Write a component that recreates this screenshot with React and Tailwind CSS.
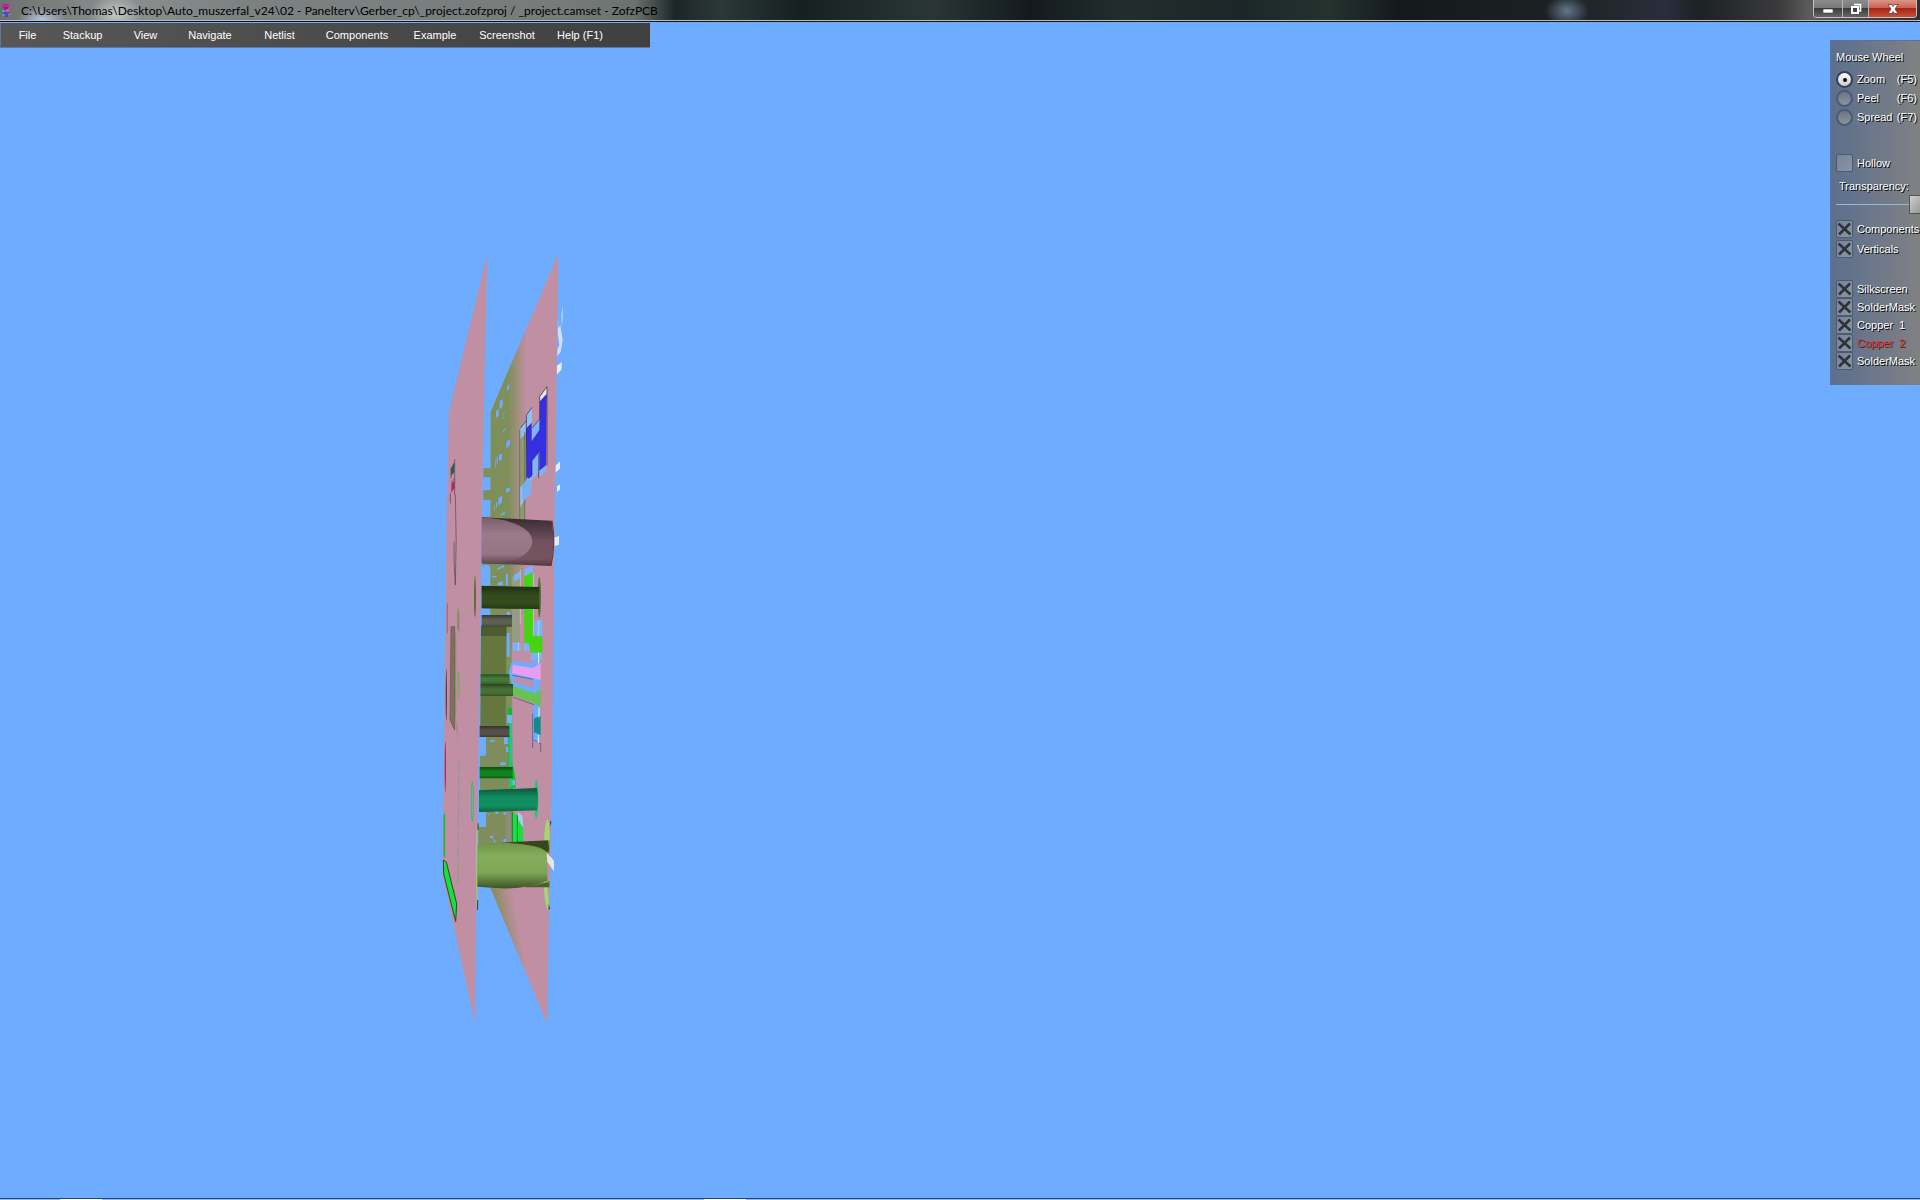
import React, { useState } from "react";

const MENU_ITEMS = [
  "File",
  "Stackup",
  "View",
  "Navigate",
  "Netlist",
  "Components",
  "Example",
  "Screenshot",
  "Help (F1)",
];

const WHEEL_MODES = [
  { name: "Zoom", shortcut: "(F5)" },
  { name: "Peel", shortcut: "(F6)" },
  { name: "Spread", shortcut: "(F7)" },
];

const LAYERS = [
  { id: "silk-top", name: "Silkscreen" },
  { id: "mask-top", name: "SolderMask" },
  { id: "copper-1", name: "Copper  1" },
  { id: "copper-2", name: "Copper  2", active: true },
  { id: "mask-bottom", name: "SolderMask" },
];

const AppIcon = () => (
  <svg viewBox="0 0 12 15" className="mt-[3px] h-[15px] w-3 shrink-0" aria-hidden="true">
    <rect x="1" y="1" width="7" height="4" rx="1" fill="#c0269a" />
    <rect x="8" y="2" width="4" height="1" fill="#8d5c7c" />
    <rect x="3" y="4" width="4" height="3" fill="#8a1d83" />
    <rect x="1" y="7" width="3" height="2" fill="#3fae9a" />
    <rect x="5" y="6" width="3" height="4" fill="#e04fc0" />
    <rect x="2" y="9" width="6" height="2" fill="#4848c8" />
    <rect x="1" y="11" width="3" height="2" fill="#3c9fc0" />
    <rect x="4" y="11" width="3" height="3" fill="#7a35c0" />
    <rect x="7" y="11" width="2" height="1" fill="#4fae6a" />
  </svg>
);

const TitleBar = () => (
  <header className="relative flex h-[22px] shrink-0 items-start justify-between border-b border-[#10131c] bg-[radial-gradient(ellipse_22px_16px_at_1567px_11px,#65758a,transparent),linear-gradient(90deg,#6d7271_0px,#8b8f8f_120px,#7c8282_240px,#777c7b_560px,#6a7270_635px,#1d2627_675px,#2b3836_720px,#15201f_800px,#2a3634_930px,#131a1e_1030px,#222d2b_1120px,#1c2628_1240px,#25322e_1330px,#14191b_1400px,#1b2022_1540px,#20272b_1600px,#2a2e3a_1665px,#1c2124_1700px,#3b3b3c_1780px,#5c5c5d_1810px,#2d2f30_100%)]">
    <div className="absolute inset-x-0 bottom-0 h-px bg-[#b9bdc0]" />
    <div className="flex h-5 w-[668px] items-start gap-2 bg-[radial-gradient(ellipse_24px_14px_at_42px_20px,#b9c3dc,transparent),radial-gradient(ellipse_26px_20px_at_116px_14px,#c3c8c5,transparent)] pl-px">
      <AppIcon />
      <h1 className="whitespace-nowrap font-[Lato,sans-serif] text-[12px] leading-[22px] text-black">
        C:\Users\Thomas\Desktop\Auto_muszerfal_v24\02 - Panelterv\Gerber_cp\_project.zofzproj / _project.camset - ZofzPCB
      </h1>
    </div>
    <div className="mr-[3px] flex h-[18px] overflow-hidden rounded-b-[4px] border border-t-0 border-[#c2c2c2] bg-gradient-to-b from-[#8e8e8e] via-[#6a6a6a] to-[#474747]">
      <button type="button" aria-label="Minimize" className="flex w-[29px] items-center justify-center border-r border-[#b8b8b8] bg-[linear-gradient(#8c8c8c_0%,#777_48%,#3c3c3c_50%,#666_100%)]">
        <svg viewBox="0 0 12 12" className="h-3 w-3">
          <rect x="1" y="6" width="10" height="4" fill="#fff" stroke="#444" strokeWidth="0.6" />
        </svg>
      </button>
      <button type="button" aria-label="Restore" className="flex w-[26px] items-center justify-center border-r border-[#b8b8b8] bg-[linear-gradient(#8c8c8c_0%,#777_48%,#3c3c3c_50%,#666_100%)]">
        <svg viewBox="0 0 12 12" className="h-3 w-3" fill="none">
          <path d="M4 1.5h6.5v6.5h-1.5" stroke="#fff" strokeWidth="1.6" />
          <rect x="2" y="4" width="6" height="6" stroke="#fff" strokeWidth="2" />
        </svg>
      </button>
      <button type="button" aria-label="Close" className="flex w-[47px] items-center justify-center bg-[linear-gradient(#d9958a_0%,#c8604f_48%,#a92414_50%,#c9503a_100%)]">
        <svg viewBox="0 0 12 12" className="h-3 w-3">
          <path d="M1 1.500h3.500L6 3.500l1.500-2H11L8 6l3 4.500H7.500L6 8.500l-1.500 2H1L4 6z" fill="#fff" stroke="#4a3030" strokeWidth="0.7" />
        </svg>
      </button>
    </div>
  </header>
);

const MenuBar = () => (
  <nav className="absolute left-0 top-px w-[650px] border-b border-l border-[#5f7898] bg-gradient-to-r from-[#575757] to-[#404040] pr-[29px]">
    <ul className="grid grid-cols-[53px_57px_69px_60px_79px_76px_80px_64px_82px]">
      {MENU_ITEMS.map((item) => (
        <li key={item}>
          <button type="button" className="block h-6 w-full whitespace-nowrap text-center text-[11px] leading-6 text-white">
            {item}
          </button>
        </li>
      ))}
    </ul>
  </nav>
);

const CheckRow = ({ id, label, checked, onChange, active }) => (
  <div className="flex h-[18px] items-center gap-1">
    <span className="relative h-[18px] w-[17px] shrink-0">
      <input
        id={id}
        type="checkbox"
        checked={checked}
        onChange={onChange}
        className="block h-full w-full appearance-none rounded-xs border border-[#4a5970] bg-gradient-to-br from-[#76859b] to-[#8b94a1]"
      />
      {checked && (
        <svg viewBox="0 0 17 18" className="pointer-events-none absolute inset-0">
          <path d="M2.500 3.500l12 11M14 3.500l-11 11" stroke="#2f3238" strokeWidth="2.600" />
        </svg>
      )}
    </span>
    <label
      htmlFor={id}
      className={active
        ? "whitespace-pre text-[#e03a3a] [text-shadow:1px_1px_0_#3a2020]"
        : "whitespace-pre"}
    >
      {label}
    </label>
  </div>
);

const SidePanel = () => {
  const [mode, setMode] = useState("Zoom");
  const [transparency, setTransparency] = useState(100);
  const [flags, setFlags] = useState({
    hollow: false,
    components: true,
    verticals: true,
    "silk-top": true,
    "mask-top": true,
    "copper-1": true,
    "copper-2": true,
    "mask-bottom": true,
  });

  const toggle = (key) => setFlags({ ...flags, [key]: !flags[key] });

  return (
    <aside className="absolute right-0 top-[18px] w-[90px] overflow-hidden border-l border-t border-[#5b7396] bg-gradient-to-r from-[#5b6f8d] to-[#808183] pb-[15px] pl-[5px] pt-[7px] text-[11px] text-white [text-shadow:1px_1px_0_#000]">
      <fieldset>
        <legend className="h-[18px] leading-[18px]">Mouse Wheel</legend>
        <div className="mt-1">
          {WHEEL_MODES.map(({ name, shortcut }) => (
            <div key={name} className="flex h-[19px] items-center gap-1 pr-[3px]">
              <span className="relative h-[17px] w-[17px] shrink-0">
                <input
                  id={`wheel-${name}`}
                  type="radio"
                  name="wheel"
                  checked={mode === name}
                  onChange={() => setMode(name)}
                  className="block h-full w-full appearance-none rounded-full border-2 border-[#4a5a72] bg-gradient-to-b from-[#6b7685] to-[#8b929c] checked:border-[#34425a] checked:from-[#fdfdfd] checked:to-[#cfcfcf]"
                />
                {mode === name && (
                  <span className="pointer-events-none absolute inset-0 m-auto h-1 w-1 rounded-full bg-black" />
                )}
              </span>
              <label htmlFor={`wheel-${name}`} className="flex grow justify-between whitespace-nowrap">
                <span>{name}</span>
                <span>{shortcut}</span>
              </label>
            </div>
          ))}
        </div>
      </fieldset>

      <div className="mt-[27px]">
        <CheckRow id="hollow" label="Hollow" checked={flags.hollow} onChange={() => toggle("hollow")} />
      </div>

      <label htmlFor="transparency" className="mt-[6px] block h-[17px] pl-[3px] leading-[17px]">
        Transparency:
      </label>
      <input
        id="transparency"
        type="range"
        min="0"
        max="100"
        value={transparency}
        onChange={(e) => setTransparency(Number(e.target.value))}
        className="block h-[19px] w-[89px] appearance-none bg-[linear-gradient(#93b9d6,#93b9d6)] bg-[length:100%_1px] bg-center bg-no-repeat [&::-webkit-slider-thumb]:h-[19px] [&::-webkit-slider-thumb]:w-4 [&::-webkit-slider-thumb]:appearance-none [&::-webkit-slider-thumb]:border [&::-webkit-slider-thumb]:border-[#555] [&::-webkit-slider-thumb]:bg-gradient-to-br [&::-webkit-slider-thumb]:from-[#d0d0d0] [&::-webkit-slider-thumb]:to-[#8f8f8f]"
      />

      <div className="mt-[6px] flex flex-col gap-[2px]">
        <CheckRow id="components" label="Components" checked={flags.components} onChange={() => toggle("components")} />
        <CheckRow id="verticals" label="Verticals" checked={flags.verticals} onChange={() => toggle("verticals")} />
      </div>

      <div className="mt-[22px]">
        {LAYERS.map(({ id, name, active }) => (
          <CheckRow key={id} id={id} label={name} active={active} checked={flags[id]} onChange={() => toggle(id)} />
        ))}
      </div>
    </aside>
  );
};

// Board stack seen almost edge-on, three drawing units per pixel
const BoardModel = () => (
  <svg viewBox="0 0 450 2400" className="absolute left-[430px] top-[218px] h-[800px] w-[150px]" role="img" aria-label="PCB stackup">
    <defs>
      <linearGradient id="mask" gradientUnits="userSpaceOnUse" x1="235" y1="0" x2="290" y2="0">
        <stop offset="0" stopColor="#7f8f59" />
        <stop offset="1" stopColor="#c08fa4" />
      </linearGradient>
      <linearGradient id="maskLow" gradientUnits="userSpaceOnUse" x1="205" y1="2040" x2="262" y2="2030">
        <stop offset="0" stopColor="#8c8d62" />
        <stop offset="1" stopColor="#c08fa4" />
      </linearGradient>
      <linearGradient id="mauveLight" x1="0" y1="0" x2="0" y2="1">
        <stop offset="0" stopColor="#7a5f6c" />
        <stop offset="0.35" stopColor="#9b7a8a" />
        <stop offset="0.8" stopColor="#957484" />
        <stop offset="1" stopColor="#5c4651" />
      </linearGradient>
      <linearGradient id="mauveDark" x1="0" y1="0" x2="0" y2="1">
        <stop offset="0" stopColor="#392930" />
        <stop offset="0.5" stopColor="#70535f" />
        <stop offset="0.85" stopColor="#76545f" />
        <stop offset="1" stopColor="#503841" />
      </linearGradient>
      <linearGradient id="shade" x1="0" y1="0" x2="0" y2="1">
        <stop offset="0" stopColor="#000" stopOpacity="0.4" />
        <stop offset="0.4" stopColor="#000" stopOpacity="0" />
        <stop offset="0.75" stopColor="#000" stopOpacity="0" />
        <stop offset="1" stopColor="#000" stopOpacity="0.3" />
      </linearGradient>
      <linearGradient id="lime" x1="0" y1="0" x2="0" y2="1">
        <stop offset="0" stopColor="#6f9349" />
        <stop offset="0.3" stopColor="#86ad5c" />
        <stop offset="0.65" stopColor="#7fa656" />
        <stop offset="1" stopColor="#3c5424" />
      </linearGradient>
    </defs>

    {/* Silkscreen showing past the far edge */}
    <g fill="#e8eef4">
      <path d="M399 195l-1 50-3 10-1-30z" fill="#b9d5f6" />
      <path d="M384 215l1 50 6-10 3 20 4 25-6 36-10 12v-20l6-12-5-40z" fill="#cfe1f6" />
      <path d="M380 378l16-12-2 24-14 14zM376 678l14-14v22l-14 12zM381 738l9-4v15l-9 6zM372 893l15-5v26l-15 5zM350 1835l22 28v30l-20-26z" />
    </g>

    {/* Right hand board */}
    <path d="M385 42L376 720 372 1000 363 1680 351 2350 182 1944 180 1500 182 515z" fill="url(#mask)" />
    <path d="M247 1160L373 1000 360 1940H247z" fill="#c08fa4" />
    <path d="M182 1930H358L351 2350 182 1944z" fill="url(#maskLow)" />
    <path d="M160 685h24v27h-24zM160 751h24v30h-24zM158 830h24v150h-24zM155 1035h26v70h-26z" fill="#7f8f59" />
    <path d="M168 1490h70v330h-70zM150 1545h20v172h-20zM145 1760h25v55h-25z" fill="#7f8c5b" />
    <g fill="#6eacff">
      <path d="M198 513l8-6v20l-8 8zM209 484l9-7v22l-9 10zM231 440l7-9v14l-7 9zM229 606l11-10v18l-11 12zM207 645l9-5v16l-9 8zM200 652l3-3v20l-3 3zM195 660l2-2v24l-2 3zM217 575l9-12v6l-9 10z" />
      <path d="M217 520h4v4h-4zM224 514h4v4h-4zM218 532h4v4h-4zM225 527h3v3h-3z" opacity="0.6" />
      <path d="M160 714h19v36h-19zM228 746l11-4v12l-11 4zM205 775l11-8v20l-11 10zM198 785h3v18h-3zM192 795h2v16h-2zM213 822l12-7v6l-12 6zM160 780h18v50h-18z" />
      <path d="M160 975h17v62h-17zM202 985l20-10v6l-20 10zM203 1028l15-6v14h-15zM228 1002h6v34h-6zM187 1008h12v4h-12zM155 1107h21v14h-21zM230 1115h10v20h-10z" />
      <path d="M230 1180h9v70h-9zM231 1425h12v24h-12zM150 1495h18v52h-18zM222 1492h15v20h-15zM228 1520h8v16h-8zM180 1500h14v5h-14zM211 1567h16v8h-16z" />
      <path d="M145 1717h19v44h-19zM196 1714h9v8h-9zM220 1717h14v8h-14zM180 1788h10v6h-10zM220 1797h8v10h-8z" />
      <path d="M170 1716l10 10h-4zM185 1790l14 18h-6z" />
    </g>

    {/* Outline slots around the display pads */}
    <path d="M270 590l17-20v200l-3 70h-14z" fill="#8f9a6f" />
    <path d="M271 565l17-22v36l-17 18zM290 524l16-20v44l-16 18zM288 722l16-16v32l-16 30zM270 742l12-10v50l-12 20z" fill="#8fc0f5" />
    <path d="M330 470l20-28v20l-20 22z" fill="#e3ebf2" />
    <path d="M306 564l22-30v36l-22 34zM306 664l22-28v56l-22 28zM328 692l20-16v14l-20 24z" fill="#7db6f8" />
    <path d="M330 484L350 462 348 676 328 692V636L306 664V708L290 722 288 566 305 548V604L328 570z" fill="#352fe2" />
    <path d="M329 470v66l-22 28M329 470l22-30v236M290 524l16-22M306 664v42M289 524v196M326 640v74M271 565l17-22" stroke="#39293a" strokeWidth="2" fill="none" />
    <path d="M269 570v270M284 575v265" stroke="#5e6453" strokeWidth="2" />

    <g transform="translate(0 720)">
      <path d="M276 20l16-28 12 10v40l-26 22z" fill="#79aef0" />
      <path d="M246 290l24-14v210h-24zM268 260h8v60h-8z" fill="#979a84" />
      <path d="M252 285l17-10v20l-17 10zM283 268l26-12v22l-26 12zM313 425l24-8v52h-24zM302 515h34v25h-34zM281 490h18v22h-18zM248 488h24v24h-24z" fill="#79b4fa" />
      <path d="M282 290l28-14v190l27 4v48l-36-2-4-26-15-2z" fill="#46d314" />
      <path d="M265 487v26M326 420v48M271 270v160M310 278v190" stroke="#cfd8d0" strokeWidth="2" />
    </g>

    <g transform="translate(0 1230)">
      <path d="M246 32l60 8 24-28v270l-22-12v-95l8-30-66-28-14-50z" fill="#6eacff" />
      <path d="M245 4h58v32l-58-6z" fill="#c08fa4" />
      <path d="M248 44l60 10 24-14v50l-24-6-62-14z" fill="#e79df0" />
      <path d="M250 80l60 14v20l-58-18z" fill="#c08fa4" />
      <path d="M248 108l64 22 20-12v54l-22-12-62-24z" fill="#66c353" />
      <path d="M304 2h30v6h-30z" fill="#46d314" />
      <path d="M312 205l20-8v58l-20-8z" fill="#148b89" />
      <path d="M247 76l62 12M250 142l62 22M308 190v104M332 280v26M312 270l20 12" stroke="#594759" strokeWidth="2" fill="none" />
      <path d="M326 8v32M327 172v30M325 255v24" stroke="#eaf6ff" strokeWidth="3" />
      <path d="M233 170l13 5v200l8 110-10-40-8-100z" fill="#16b83b" />
      <path d="M238 220h8l2 190h-10z" fill="#25c883" />
      <path d="M244 335q14 30 13 80l-11-2z" fill="#0fc431" />
      <path d="M232 195h14v25h-14zM247 390h8v16h-8z" fill="#75b6ef" />
      <path d="M232 30q9 8 0 24z" fill="#64b53b" />
      <path d="M247 485l14 10 18 38v55h-32z" fill="#18e03f" />
      <path d="M263 485l14 12 3 36-16-24z" fill="#9ed0f4" />
      <path d="M262 496v90M247 485v95" stroke="#185024" strokeWidth="2" />
    </g>

    {/* Recess between the boards */}
    <path d="M153 1158h76l-2 300h-76z" fill="#65763f" />
    <path d="M153 1158h76v30h-76z" fill="#4c5b32" />
    <path d="M228 1715h15v95h-15z" fill="#8c8e7c" />

    {/* Plated holes */}
    <path d="M155 832L365 842Q376 910 363 978L155 970z" fill="url(#mauveDark)" />
    <path d="M155 832C250 838 307 868 307 904S260 966 200 971L155 970z" fill="url(#mauveLight)" />
    <path d="M366 842q12 68-3 136" stroke="#5b3541" strokeWidth="3" fill="none" />
    <ellipse cx="328" cy="1072" rx="5" ry="60" fill="#557139" />
    <path d="M155 1038L328 1041V1107L155 1105z" fill="#334b1d" />
    <path d="M155 1038L328 1041V1107L155 1105z" fill="url(#shade)" />
    <path d="M155 1125h91v35h-91z" fill="#5c6054" />
    <path d="M155 1125h91v35h-91z" fill="url(#shade)" />
    <path d="M152 1303h86v28h-86z" fill="#44793a" />
    <path d="M152 1303h86v28h-86z" fill="url(#shade)" />
    <path d="M152 1332h97v36h-97z" fill="#467037" />
    <path d="M152 1332h97v36h-97z" fill="url(#shade)" />
    <path d="M149 1458h89v33h-89z" fill="#555048" />
    <path d="M149 1458h89v33h-89z" fill="url(#shade)" />
    <path d="M149 1581h99v34h-99z" fill="#12831c" />
    <path d="M149 1581h99v34h-99z" fill="url(#shade)" />
    <ellipse cx="319" cy="1678" rx="6" ry="60" fill="#26c47e" />
    <path d="M147 1651L321 1644Q327 1680 321 1711L147 1716z" fill="#118e60" />
    <path d="M147 1651L321 1644Q327 1680 321 1711L147 1716z" fill="url(#shade)" />

    {/* Mounting hole at the bottom */}
    <path d="M352 1736q8 10 7 70l-8 30v90l7 74-6 10q-12-40-10-90V1806q2-58 10-70z" fill="#a5d66f" />
    <path d="M360 1742l4 4-2 14zM356 1990v20l4-4z" fill="#293619" />
    <path d="M215 1808L355 1801l4 38L300 1825z" fill="#36461d" />
    <path d="M143 1813Q240 1802 310 1818 340 1825 352 1838V1922Q290 1948 210 1945L141 1940z" fill="url(#lime)" />
    <path d="M290 1938Q330 1934 360 1924v18H285z" fill="#4b612b" />
    <path d="M352 1836h8M345 1926h15M358 1800v38M358 1926v16" stroke="#7a9a4d" strokeWidth="3" />
    <path d="M350 1838l22 26v28l-20-26z" fill="#e4e8e2" />

    {/* Left hand board */}
    <path d="M172 42L164 400 155 840 150 1260 141 1800 135 2350 38 1908 38 1820 45 1240 50 850 57 515z" fill="#c08fa4" />
    <path d="M63 684l10-18v30l-10 12z" fill="#28614d" />
    <path d="M64 730l10-8v22l-10 14z" fill="#a72d7a" />
    <path d="M63 684v30M74 658v107M64 726l10-10M76 765q5 130 0 270-5-60-4-130M61 760v30" stroke="#51424b" strokeWidth="2" fill="none" />
    <ellipse cx="135" cy="1070" rx="3" ry="62" fill="#5d6a3a" />
    <path d="M63 1160h11v310l-14-30z" fill="#81705f" stroke="#5e5b4b" strokeWidth="2" />
    <path d="M82 1110l6 10v60l-7-15zM81 1440l3 65-5-40z" fill="#8c8b79" />
    <path d="M85 1105v65M77 1180v250" stroke="#68944e" strokeWidth="2" />
    <path d="M86 1295v80M83 1310q8 12 0 36" stroke="#60b63e" strokeWidth="3" fill="none" />
    <path d="M52 1090v90" stroke="#a44658" strokeWidth="2" />
    <ellipse cx="49" cy="1365" rx="2" ry="78" fill="#5c3c50" />
    <ellipse cx="46" cy="1580" rx="2" ry="76" fill="#a22a69" />
    <path d="M86 1565l-1 185-2 195" stroke="#66a964" strokeWidth="2" strokeDasharray="34 8" fill="none" />
    <ellipse cx="127" cy="1685" rx="3" ry="60" fill="none" stroke="#35bd7c" strokeWidth="3" />
    <path d="M43 1722v130" stroke="#20b449" strokeWidth="5" />
    <path d="M40 1860l9 6 31 125-3 54-36-143z" fill="#18de3e" stroke="#294b2c" strokeWidth="3" />
    <path d="M143 1750q-8 100 0 250" stroke="#a5c66f" strokeWidth="4" fill="none" />
    <path d="M144 1750v20M143 1980v30" stroke="#333e23" strokeWidth="3" />
  </svg>
);

const App = () => (
  <div className="flex h-screen flex-col overflow-hidden bg-[#6eacff] font-['Liberation_Sans',Arial,sans-serif]">
    <TitleBar />
    <main className="relative grow">
      <MenuBar />
      <BoardModel />
      <SidePanel />
    </main>
    {/* Top edge of the auto-hidden taskbar */}
    <footer className="flex h-[2px] shrink-0 gap-[602px] border-t border-[#21446f] bg-[#8fb8ec] pl-[60px]">
      <div className="h-px w-[42px] bg-white" />
      <div className="h-px w-[42px] bg-white" />
    </footer>
  </div>
);

export default App;
